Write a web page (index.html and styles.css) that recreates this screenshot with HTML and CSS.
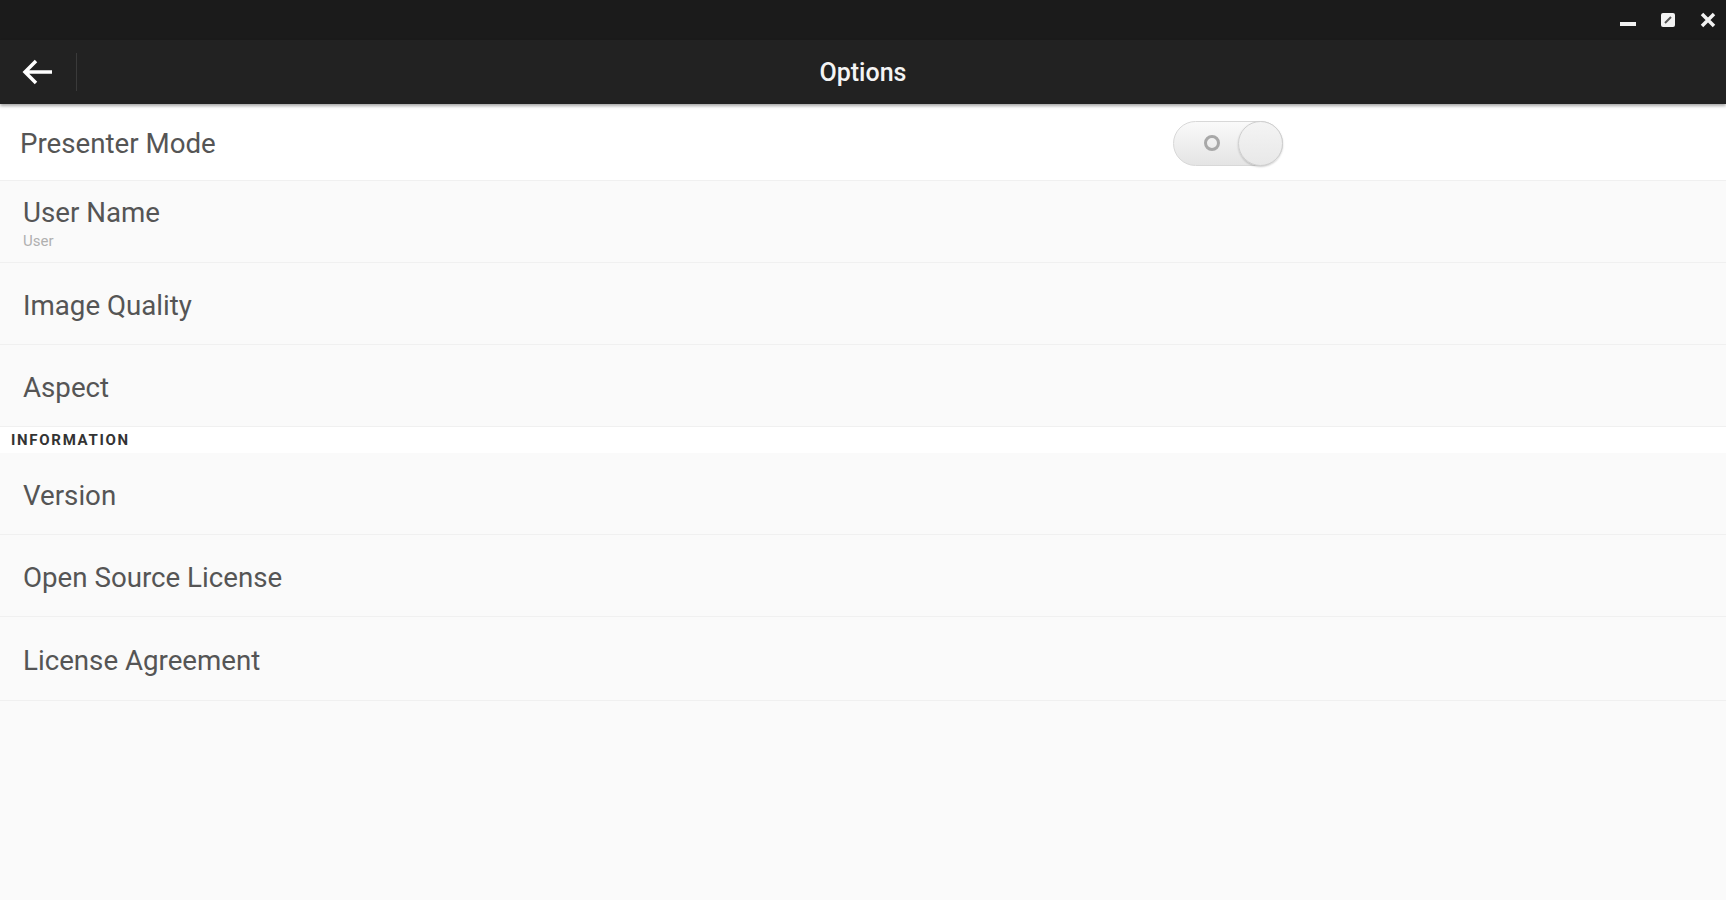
FILE: index.html
```html
<!DOCTYPE html>
<html>
  <head>
    <title>Options</title>
    <link rel="stylesheet" href="styles.css">
  </head>
  <body>
    <div class="titlebar">
      <div class="win-btn">
        <svg width="20" height="20" viewBox="0 0 20 20"><rect x="2" y="12" width="16" height="4" fill="#f2f2f2"/></svg>
      </div>
      <div class="win-btn">
        <svg width="20" height="20" viewBox="0 0 20 20"><rect x="3" y="3" width="14" height="14" rx="2" fill="#f2f2f2"/><path d="M7 13 L13 7" stroke="#555" stroke-width="2"/></svg>
      </div>
      <div class="win-btn">
        <svg width="20" height="20" viewBox="0 0 20 20"><path d="M4 4 L16 16 M16 4 L4 16" stroke="#f2f2f2" stroke-width="3.5"/></svg>
      </div>
    </div>

    <div class="toolbar">
      <div class="back">
        <svg width="34" height="30" viewBox="0 0 34 30"><path d="M31 15 H5 M15 4 L4 15 L15 26" fill="none" stroke="#fff" stroke-width="3.5"/></svg>
      </div>
      <div class="divider"></div>
      <div class="title">Options</div>
    </div>

    <div class="list">
      <div class="row row_white row_first">
        <div class="label">Presenter Mode</div>
        <div class="switch">
          <div class="switch_off"></div>
          <div class="knob"></div>
        </div>
      </div>
      <div class="row">
        <div>
          <div class="label">User Name</div>
          <div class="sub">User</div>
        </div>
      </div>
      <div class="row"><div class="label">Image Quality</div></div>
      <div class="row"><div class="label">Aspect</div></div>
      <div class="section">INFORMATION</div>
      <div class="row"><div class="label">Version</div></div>
      <div class="row"><div class="label">Open Source License</div></div>
      <div class="row row_tall"><div class="label">License Agreement</div></div>
    </div>
  </body>
</html>
```

FILE: styles.css
```css
* {
  padding: 0;
  margin: 0;
  box-sizing: border-box;
  font-family: Roboto, "Liberation Sans", sans-serif;
}

body {
  background: #fafafa;
  height: 900px;
  overflow: hidden;
}

.titlebar {
  height: 40px;
  background: #1b1b1b;
  display: flex;
  justify-content: flex-end;
  align-items: center;
  padding-right: 8px;
  gap: 20px;
}
.win-btn {
  width: 20px;
  height: 20px;
}

.toolbar {
  height: 64px;
  background: #222;
  display: flex;
  align-items: center;
  position: relative;
  box-shadow: 0 2px 3px rgba(0, 0, 0, 0.35);
  z-index: 1;
}
.back {
  width: 76px;
  padding-left: 21px;
  display: flex;
  align-items: center;
}
.divider {
  width: 1px;
  height: 38px;
  background: #3a3a3a;
}
.title {
  position: absolute;
  left: 0;
  right: 0;
  text-align: center;
  color: #f4f4f4;
  font-size: 25px;
  font-weight: 500;
}

.row {
  height: 82px;
  display: flex;
  align-items: center;
  justify-content: space-between;
  padding-left: 23px;
  padding-top: 3px;
  border-bottom: 1px solid #f0f0f0;
}
.row_white {
  background: #fff;
}
.row_first {
  height: 77px;
  padding-left: 20px;
}
.row_tall {
  height: 84px;
}
.label {
  font-size: 27.7px;
  color: #555;
}
.sub {
  font-size: 15px;
  color: #b0b0b0;
  margin-top: 3px;
}

.switch {
  width: 110px;
  height: 45px;
  margin-right: 443px;
  border-radius: 23px;
  background: linear-gradient(#fafafa, #e4e4e4);
  border: 1px solid #d8d8d8;
  position: relative;
}
.switch_off {
  position: absolute;
  left: 30px;
  top: 13px;
  width: 16px;
  height: 16px;
  border-radius: 50%;
  border: 3px solid #a8a8a8;
}
.knob {
  position: absolute;
  right: -1px;
  top: -1px;
  width: 45px;
  height: 45px;
  border-radius: 50%;
  background: linear-gradient(#f4f4f4, #e8e8e8);
  border: 1px solid #cfcfcf;
  box-shadow: 0 1px 2px rgba(0, 0, 0, 0.2);
}

.section {
  height: 26px;
  background: #fff;
  font-size: 15px;
  font-weight: 700;
  color: #333;
  letter-spacing: 1.7px;
  padding-left: 11px;
  line-height: 27px;
}
```
